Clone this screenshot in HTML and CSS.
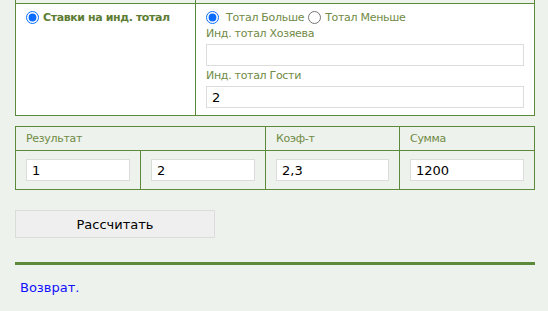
FILE: index.html
```html
<!DOCTYPE html>
<html>
<head>
<meta charset="utf-8">
<link rel="stylesheet" href="styles.css">
</head>
<body>
<table class="grid top">
  <tr class="cut"><td class="c-left"></td><td class="c-right"></td></tr>
  <tr>
    <td class="c-left opt">
      <label class="bold"><input type="radio" class="rd" name="m" checked> Ставки на инд. тотал</label>
    </td>
    <td class="c-right fields">
      <div class="radios">
        <label><input type="radio" class="rd" name="t" checked> Тотал Больше</label>
        <label><input type="radio" class="rd" name="t"> Тотал Меньше</label>
      </div>
      <div class="lbl">Инд. тотал Хозяева</div>
      <input type="text" class="inp wide" value="">
      <div class="lbl">Инд. тотал Гости</div>
      <input type="text" class="inp wide" value="2">
    </td>
  </tr>
</table>

<table class="grid res">
  <tr class="head">
    <th colspan="2">Результат</th>
    <th>Коэф-т</th>
    <th>Сумма</th>
  </tr>
  <tr class="vals">
    <td class="w1"><input type="text" class="inp" value="1"></td>
    <td class="w1"><input type="text" class="inp" value="2"></td>
    <td class="w2"><input type="text" class="inp" value="2,3"></td>
    <td class="w3"><input type="text" class="inp" value="1200"></td>
  </tr>
</table>

<button class="btn" type="button">Рассчитать</button>

<hr class="sep">

<a class="back" href="#">Возврат.</a>
</body>
</html>
```

FILE: styles.css
```css
html, body {
  margin: 0;
  padding: 0;
  background: #edf2ec;
}
body {
  padding: 0 13px 0 15px;
  font-family: "DejaVu Sans", Verdana, sans-serif;
  font-size: 11px;
  color: #6f8a45;
}
.grid {
  border-collapse: collapse;
  width: 520px;
}
.grid td, .grid th {
  border: 1px solid #5b8a3b;
  padding: 0;
}
.top .cut td {
  height: 3px;
  border-top: none;
}
.top .c-left { width: 179px; background: #fff; }
.top .c-right { background: #fff; }
.top .cut .c-left, .top .cut .c-right { background: #edf2ec; }
.opt {
  vertical-align: top;
  padding: 7px 10px 0 10px !important;
}
.bold {
  font-weight: bold;
  color: #5e7d34;
  display: flex;
  align-items: center;
  letter-spacing: -0.4px;
}
.rd {
  margin: 0 4px 0 0;
  width: 13px;
  height: 13px;
  accent-color: #0a6cff;
}
.fields {
  padding: 7px 10px 7px 10px !important;
  vertical-align: top;
}
.radios {
  display: flex;
  gap: 4px;
  height: 13px;
  align-items: center;
  margin-bottom: 3px;
  letter-spacing: -0.3px;
}
.radios label {
  display: flex;
  align-items: center;
}
.radios .rd { margin-right: 7px; }
.radios label + label .rd { margin-right: 4px; }
.lbl {
  line-height: 14px;
  margin-bottom: 3px;
  letter-spacing: -0.3px;
}
.inp {
  box-sizing: border-box;
  height: 22px;
  border: 1px solid #dcdcdc;
  background: #fff;
  font-family: "DejaVu Sans", Verdana, sans-serif;
  font-size: 13px;
  color: #000;
  padding: 0 5px;
  margin: 0;
  display: block;
  outline: none;
}
.wide {
  width: 318px;
  margin-bottom: 3px;
}
.fields .wide:last-child { margin-bottom: 0; }
.res {
  margin-top: 10px;
  width: 520px;
}
.res th {
  font-weight: normal;
  text-align: left;
  height: 23px;
  padding: 0 10px;
  color: #6f8a45;
  letter-spacing: -0.3px;
}
.res .vals td {
  height: 38px;
  padding: 0 10px;
}
.res .w1 { width: 104px; }
.res .w1 .inp { width: 104px; }
.res .w2 { width: 113px; }
.res .w2 .inp { width: 113px; }
.res .w3 .inp { width: 114px; }
.btn {
  display: block;
  margin-top: 20px;
  width: 200px;
  height: 28px;
  background: #efefef;
  border: 1px solid #dcdcdc;
  font-family: "DejaVu Sans", Verdana, sans-serif;
  font-size: 13px;
  color: #000;
  padding: 0;
}
.sep {
  margin: 24px 0 0 0;
  width: 520px;
  height: 3px;
  border: none;
  background: #5b8a3b;
}
.back {
  display: inline-block;
  margin: 15px 0 0 5px;
  font-size: 13px;
  color: #1010ff;
  text-decoration: none;
}
```
